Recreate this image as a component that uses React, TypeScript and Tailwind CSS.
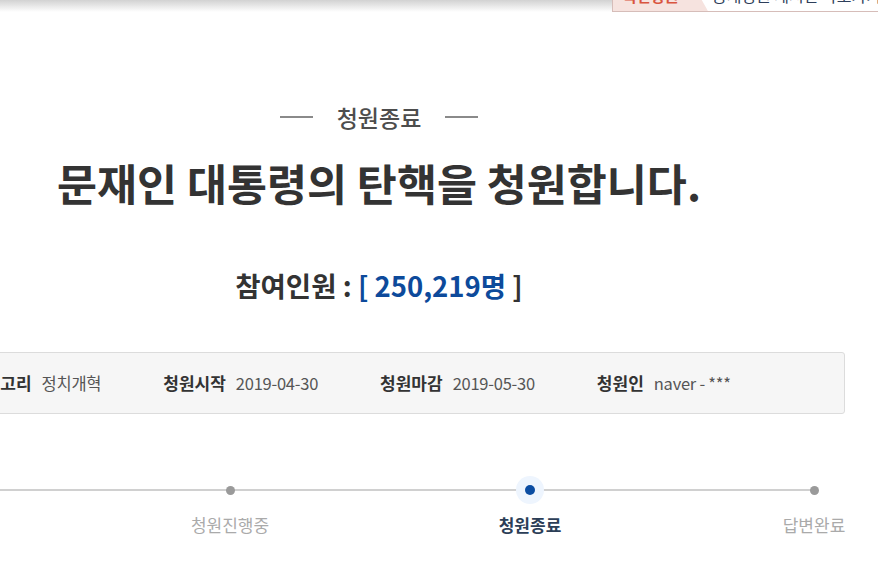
import React from "react";

const font = { fontFamily: '"Noto Sans CJK KR", "Noto Sans", sans-serif' };

function InfoItem({ label, value }: { label: string; value: string }) {
  return (
    <div className="flex items-center gap-[10px] whitespace-nowrap">
      <span className="text-[17px] font-bold text-[#333]">{label}</span>
      <span className="text-[16.5px] text-[#555] tracking-[-0.25px]">{value}</span>
    </div>
  );
}

function Step({ label, state }: { label: string; state: "done" | "active" | "todo" }) {
  return (
    <div className="flex w-[100px] flex-col items-center">
      <div className="relative flex h-[28px] w-[28px] items-center justify-center">
        {state === "active" ? (
          <div className="flex h-[28px] w-[28px] items-center justify-center rounded-full bg-[#eef5fe]">
            <div className="h-[10px] w-[10px] rounded-full bg-[#0b4da2]" />
          </div>
        ) : (
          <div className="h-[9px] w-[9px] rounded-full bg-[#9a9a9a]" />
        )}
      </div>
      <div
        className={
          "mt-[9px] whitespace-nowrap text-[17px] leading-[24px] " +
          (state === "active" ? "font-bold text-[#2c3e57]" : "text-[#aaaaaa]")
        }
      >
        {label}
      </div>
    </div>
  );
}

export default function App() {
  return (
    <div className="relative h-[561px] w-[878px] overflow-hidden bg-white" style={font}>
      <div className="h-[12px] bg-gradient-to-b from-[#d2d2d2] to-white" />
      <div className="absolute right-[-4px] top-[-24px] flex h-[36px] w-[270px] items-end overflow-hidden border border-[#d6bdb9] bg-white">
        <div className="flex h-full w-[100px] items-end bg-[#f6e3df] pb-[8px] pl-[10px] text-[15px] font-bold leading-none text-[#d9553f] [clip-path:polygon(0_0,80%_0,100%_100%,0_100%)]">
          국민청원
        </div>
        <div className="pb-[8px] pl-[4px] text-[16px] leading-none text-[#2d3e5a] whitespace-nowrap">
          공개청원 게시판 바로가기
        </div>
      </div>

      <div className="-ml-[87px] flex w-[932px] flex-col items-center">
        <div className="mt-[90px] flex h-[30px] items-center">
          <div className="h-[1.5px] w-[33px] bg-[#8a8a8a]" />
          <div className="mx-[24px] text-[23px] leading-[30px] font-medium text-[#4d4d4d]">청원종료</div>
          <div className="h-[1.5px] w-[33px] bg-[#8a8a8a]" />
        </div>
        <h1 className="mt-[26px] h-[50px] whitespace-nowrap text-[43.5px] font-bold leading-[50px] text-[#333]">
          문재인 대통령의 탄핵을 청원합니다.
        </h1>
        <div className="mt-[59px] h-[36px] whitespace-nowrap text-[27.5px] font-bold leading-[36px] text-[#333]">
          참여인원 : <span className="text-[#0d4a9b]">[ 250,219명</span> ]
        </div>
        <div className="mt-[49px] flex h-[62px] w-full items-center gap-[62px] rounded-[3px] border border-[#dcdcdc] bg-[#f6f6f6] pl-[55px]">
          <InfoItem label="카테고리" value="정치개혁" />
          <InfoItem label="청원시작" value="2019-04-30" />
          <InfoItem label="청원마감" value="2019-05-30" />
          <InfoItem label="청원인" value="naver - ***" />
        </div>
      </div>

      <div className="relative mt-[62px] flex">
        <div className="absolute left-0 top-[13px] h-[2px] w-[814px] bg-[#d0d0d0]" />
        <div className="relative ml-[180px] flex">
          <Step label="청원진행중" state="done" />
          <div className="w-[200px]" />
          <Step label="청원종료" state="active" />
          <div className="w-[184px]" />
          <Step label="답변완료" state="todo" />
        </div>
      </div>
    </div>
  );
}
